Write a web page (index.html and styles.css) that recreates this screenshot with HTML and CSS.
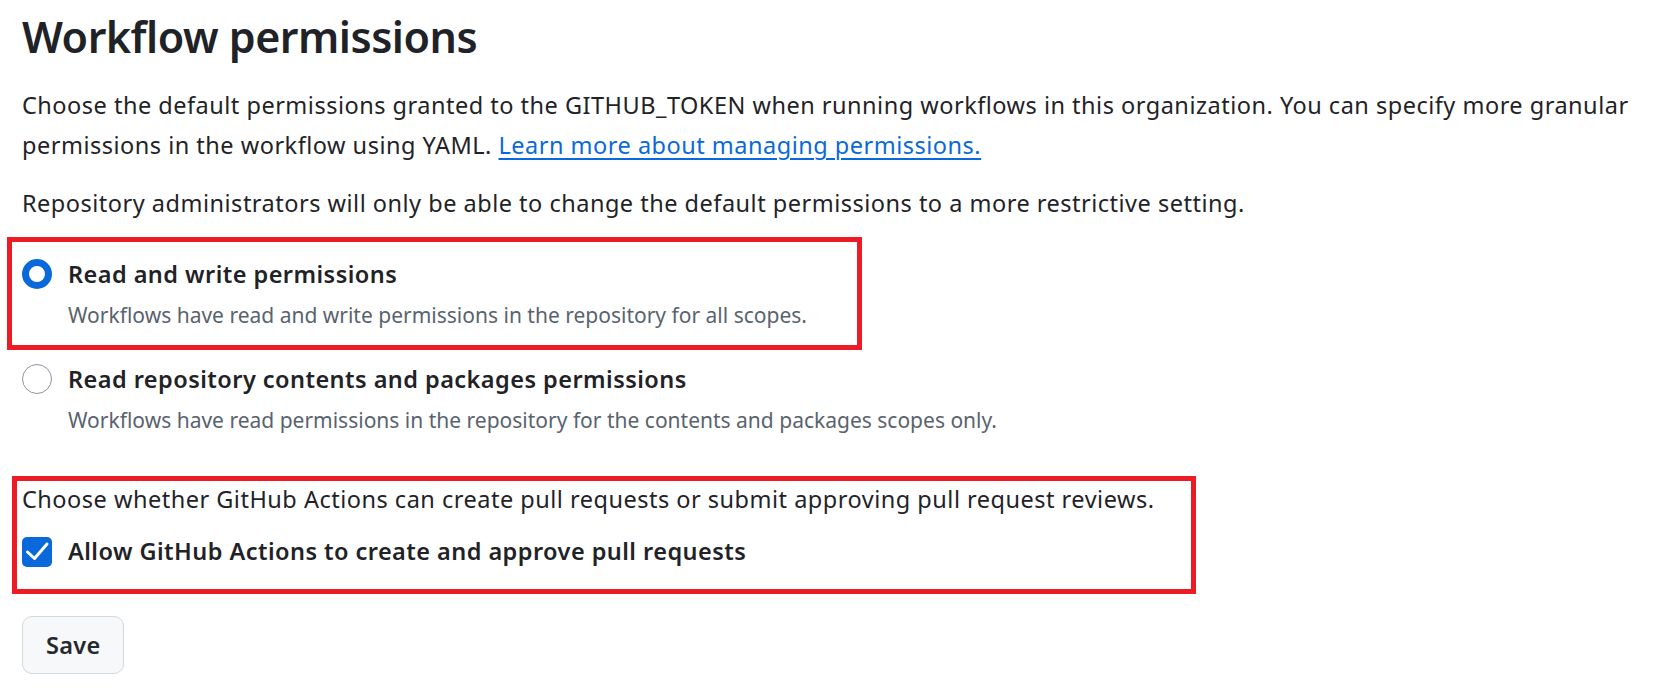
FILE: index.html
```html
<!DOCTYPE html>
<html lang="en">
<head>
  <meta charset="UTF-8"/>
  <meta name="viewport" content="width=device-width, initial-scale=1.0"/>
  <title>Workflow permissions</title>
  <link rel="stylesheet" href="styles.css">
</head>
<body>
  <main class="settings">
    <h2 class="title">Workflow permissions</h2>
    <p class="lead">Choose the default permissions granted to the GITHUB_TOKEN when running workflows in this organization. You can specify more granular permissions in the workflow using YAML. <a href="#">Learn more about managing permissions.</a></p>
    <p class="note">Repository administrators will only be able to change the default permissions to a more restrictive setting.</p>

    <div class="options">
      <label class="option marked">
        <span class="radio checked"></span>
        <span class="option-text">
          <span class="option-title">Read and write permissions</span>
          <span class="option-desc">Workflows have read and write permissions in the repository for all scopes.</span>
        </span>
      </label>
      <label class="option">
        <span class="radio"></span>
        <span class="option-text">
          <span class="option-title">Read repository contents and packages permissions</span>
          <span class="option-desc">Workflows have read permissions in the repository for the contents and packages scopes only.</span>
        </span>
      </label>
    </div>

    <div class="approve marked">
      <p class="approve-text">Choose whether GitHub Actions can create pull requests or submit approving pull request reviews.</p>
      <label class="check-row">
        <span class="checkbox">
          <svg viewBox="0 0 30 30" width="30" height="30"><polyline points="5.5,15 12.5,21.5 25,7" fill="none" stroke="#fff" stroke-width="3" stroke-linecap="round" stroke-linejoin="round"/></svg>
        </span>
        <span class="option-title">Allow GitHub Actions to create and approve pull requests</span>
      </label>
    </div>

    <button class="btn">Save</button>
  </main>
</body>
</html>
```

FILE: styles.css
```css
* { box-sizing: border-box; }
html, body { margin: 0; padding: 0; background: #fff; }
body {
  font-family: 'Noto Sans', 'Open Sans', Arial, sans-serif;
  color: #1f2328;
  font-size: 23.5px;
  letter-spacing: 0.5px;
}
.settings { padding: 0 0 0 22px; }

.title {
  margin: 9px 0 0 0;
  font-size: 43px;
  line-height: 55px;
  font-weight: 600;
  letter-spacing: -0.5px;
}
.lead {
  margin: 21px 0 0 0;
  line-height: 40px;
}
.lead a {
  color: #0969da;
  text-decoration: underline;
  text-decoration-thickness: 2px;
  text-underline-offset: 4px;
}
.note { margin: 18px 0 0 0; line-height: 40px; }

/* radios */
.options {
  margin-top: 34px;
  display: flex;
  flex-direction: column;
  gap: 32px;
}
.option {
  display: flex;
  align-items: flex-start;
  gap: 16px;
  position: relative;
}
.radio {
  flex: none;
  width: 30px; height: 30px;
  margin-top: 2px;
  border-radius: 50%;
  border: 1px solid #8c959f;
  background: #fff;
}
.radio.checked { border: 7.5px solid #0969da; }
.option-text { display: flex; flex-direction: column; }
.option-title {
  font-weight: 600;
  line-height: 34px;
  letter-spacing: 0.45px;
}
.option-desc {
  margin-top: 9px;
  font-size: 21px;
  line-height: 30px;
  letter-spacing: 0;
  color: #59636e;
}

/* red annotation frames */
.marked { position: relative; }
.marked::after {
  content: '';
  box-sizing: border-box;
  position: absolute;
  border: 5px solid #ed1c24;
  pointer-events: none;
}
.option.marked::after { left: -15px; top: -20px; width: 855px; height: 113px; }
.approve.marked::after { left: -10px; top: -3px; width: 1184px; height: 118px; }

.approve { margin-top: 44px; }
.approve-text { margin: 0; line-height: 40px; }
.check-row {
  margin-top: 15px;
  display: flex;
  align-items: flex-start;
  gap: 16px;
}
.checkbox {
  flex: none;
  width: 30px; height: 30px;
  margin-top: 3px;
  border-radius: 5px;
  background: #0969da;
}
.checkbox svg { display: block; }

.btn {
  margin-top: 48px;
  height: 58px;
  padding: 0 23px;
  font-family: inherit;
  font-size: 23.5px;
  font-weight: 600;
  letter-spacing: 0.3px;
  color: #25292e;
  background: #f6f8fa;
  border: 1px solid #d1d9e0;
  border-radius: 10px;
}
```
